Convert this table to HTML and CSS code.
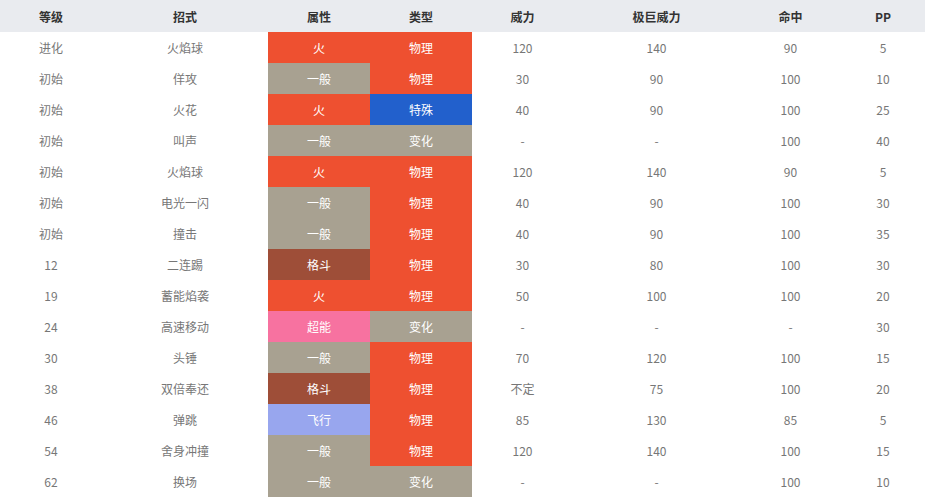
FILE: index.html
```html
<!DOCTYPE html>
<html lang="zh">
<head>
<meta charset="utf-8">
<link rel="stylesheet" href="styles.css">
</head>
<body>
<table class="moves">
<colgroup>
<col class="c1"><col class="c2"><col class="c3"><col class="c4"><col class="c5"><col class="c6"><col class="c7"><col class="c8">
</colgroup>
<thead>
<tr><th>等级</th><th>招式</th><th>属性</th><th>类型</th><th>威力</th><th>极巨威力</th><th>命中</th><th>PP</th></tr>
</thead>
<tbody>
<tr><td>进化</td><td>火焰球</td><td class="t fire">火</td><td class="t phys">物理</td><td>120</td><td>140</td><td>90</td><td>5</td></tr>
<tr><td>初始</td><td>佯攻</td><td class="t normal">一般</td><td class="t phys">物理</td><td>30</td><td>90</td><td>100</td><td>10</td></tr>
<tr><td>初始</td><td>火花</td><td class="t fire">火</td><td class="t spec">特殊</td><td>40</td><td>90</td><td>100</td><td>25</td></tr>
<tr><td>初始</td><td>叫声</td><td class="t normal">一般</td><td class="t status">变化</td><td>-</td><td>-</td><td>100</td><td>40</td></tr>
<tr><td>初始</td><td>火焰球</td><td class="t fire">火</td><td class="t phys">物理</td><td>120</td><td>140</td><td>90</td><td>5</td></tr>
<tr><td>初始</td><td>电光一闪</td><td class="t normal">一般</td><td class="t phys">物理</td><td>40</td><td>90</td><td>100</td><td>30</td></tr>
<tr><td>初始</td><td>撞击</td><td class="t normal">一般</td><td class="t phys">物理</td><td>40</td><td>90</td><td>100</td><td>35</td></tr>
<tr><td>12</td><td>二连踢</td><td class="t fight">格斗</td><td class="t phys">物理</td><td>30</td><td>80</td><td>100</td><td>30</td></tr>
<tr><td>19</td><td>蓄能焰袭</td><td class="t fire">火</td><td class="t phys">物理</td><td>50</td><td>100</td><td>100</td><td>20</td></tr>
<tr><td>24</td><td>高速移动</td><td class="t psychic">超能</td><td class="t status">变化</td><td>-</td><td>-</td><td>-</td><td>30</td></tr>
<tr><td>30</td><td>头锤</td><td class="t normal">一般</td><td class="t phys">物理</td><td>70</td><td>120</td><td>100</td><td>15</td></tr>
<tr><td>38</td><td>双倍奉还</td><td class="t fight">格斗</td><td class="t phys">物理</td><td>不定</td><td>75</td><td>100</td><td>20</td></tr>
<tr><td>46</td><td>弹跳</td><td class="t flying">飞行</td><td class="t phys">物理</td><td>85</td><td>130</td><td>85</td><td>5</td></tr>
<tr><td>54</td><td>舍身冲撞</td><td class="t normal">一般</td><td class="t phys">物理</td><td>120</td><td>140</td><td>100</td><td>15</td></tr>
<tr><td>62</td><td>换场</td><td class="t normal">一般</td><td class="t status">变化</td><td>-</td><td>-</td><td>100</td><td>10</td></tr>
</tbody>
</table>
</body>
</html>
```
FILE: styles.css
```css
html, body {
  margin: 0;
  padding: 0;
  background: #ffffff;
}
.moves {
  width: 925px;
  border-collapse: collapse;
  table-layout: fixed;
  font-family: "Microsoft YaHei", "Noto Sans CJK SC", "Liberation Sans", sans-serif;
  font-size: 12px;
  color: #777777;
}
.c1 { width: 102px; }
.c2 { width: 166px; }
.c3 { width: 102px; }
.c4 { width: 102px; }
.c5 { width: 101px; }
.c6 { width: 167px; }
.c7 { width: 101px; }
.c8 { width: 84px; }
.moves th {
  height: 32px;
  padding: 0;
  background: #e9ebef;
  color: #333333;
  font-weight: bold;
  font-size: 12px;
  text-align: center;
}
.moves td {
  height: 31px;
  padding: 0;
  text-align: center;
}
.moves td.t { color: #ffffff; }
.fire { background: #ee5030; }
.phys { background: #ee5030; }
.normal { background: #a8a191; }
.status { background: #a8a191; }
.spec { background: #2260cc; }
.fight { background: #9e4e38; }
.psychic { background: #f772a0; }
.flying { background: #98a6ee; }
```
